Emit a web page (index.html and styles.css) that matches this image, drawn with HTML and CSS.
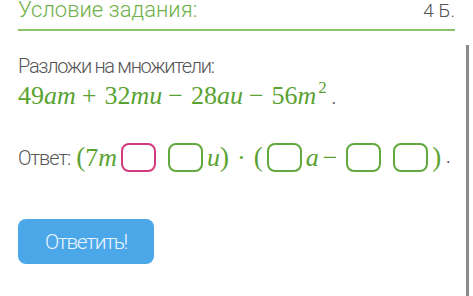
FILE: index.html
```html
<!DOCTYPE html>
<html>
  <head>
    <meta charset="UTF-8" />
    <title>Условие задания</title>
    <link rel="stylesheet" href="styles.css">
  </head>

  <body>
    <div class="task">
      <div class="task-header">
        <div class="task-title">Условие задания:</div>
        <div class="task-points">4 Б.</div>
      </div>

      <div class="task-body">
        <div class="task-text">Разложи на множители:</div>
        <div class="formula"><span class="num">49</span><span class="var">am</span><span class="op">+</span><span class="num">32</span><span class="var">mu</span><span class="op">−</span><span class="num">28</span><span class="var">au</span><span class="op">−</span><span class="num">56</span><span class="var">m</span><sup class="sup">2</sup><span class="dot">.</span></div>

        <div class="answer">
          <span class="answer-label">Ответ:</span>
          <span class="answer-formula">
            <span class="paren">(</span><span class="num">7</span><span class="var">m</span>
            <input class="cell cell-active" type="text" />
            <input class="cell" type="text" />
            <span class="var">u</span><span class="paren">)</span>
            <span class="cdot">·</span>
            <span class="paren">(</span>
            <input class="cell" type="text" />
            <span class="var">a</span>
            <span class="minus">−</span>
            <input class="cell" type="text" />
            <input class="cell" type="text" />
            <span class="paren">)</span><span class="dot">.</span>
          </span>
        </div>

        <button class="submit-btn">Ответить!</button>
      </div>
    </div>

    <div class="scrollbar"></div>
  </body>
</html>
```

FILE: styles.css
```css
body {
  font-family: Roboto, "Noto Sans", sans-serif;
  font-weight: 300;
  margin: 0;
  padding: 0;
  background: #fff;
  overflow: hidden;
}

.task {
  width: 437px;
  margin-left: 18px;
}

.task-header {
  display: flex;
  justify-content: space-between;
  align-items: baseline;
  margin-top: -1px;
  padding-bottom: 7px;
  border-bottom: 2px solid #8cc36a;
}

.task-title {
  font-size: 22px;
  line-height: 22px;
  color: #6fb04a;
}

.task-points {
  font-size: 19px;
  line-height: 22px;
  color: #555;
}

.task-body {
  padding-top: 24px;
}

.task-text {
  font-size: 20px;
  line-height: 22px;
  letter-spacing: -1.3px;
  color: #555;
}

.formula {
  font-family: "Liberation Serif", "DejaVu Serif", serif;
  font-weight: 400;
  color: #5aa232;
  font-size: 26px;
  line-height: 30px;
  margin-top: 4px;
  white-space: nowrap;
}

.var {
  font-style: italic;
}

.op {
  display: inline-block;
  margin: 0 8px 0 6px;
}

.sup {
  font-size: 17px;
  line-height: 0;
  vertical-align: 11px;
  margin-left: 2px;
}

.dot {
  color: #555;
  font-size: 16px;
  margin-left: 5px;
}

.answer {
  display: flex;
  align-items: center;
  margin-top: 28px;
}

.answer-label {
  font-size: 20px;
  letter-spacing: -1px;
  color: #555;
  margin-right: 6px;
}

.answer-formula {
  display: flex;
  align-items: center;
  font-family: "Liberation Serif", "DejaVu Serif", serif;
  font-weight: 400;
  color: #5aa232;
  font-size: 26px;
  white-space: nowrap;
}

.paren {
  font-size: 27px;
}

.cell {
  width: 35px;
  height: 29px;
  box-sizing: border-box;
  border: 2px solid #63a83d;
  border-radius: 8px;
  margin: 0 4px 0 4px;
  padding: 0;
  background: #fff;
}

.cell + .cell {
  margin-left: 8px;
}

.cell-active {
  border-color: #d23a80;
}

.cdot {
  margin: 0 8px;
}

.minus {
  margin: 0 5px 0 4px;
}

.submit-btn {
  display: block;
  margin-top: 46px;
  width: 136px;
  height: 45px;
  border: none;
  border-radius: 8px;
  background: #4ba7e8;
  color: #eaf5ff;
  font-family: Roboto, sans-serif;
  font-weight: 300;
  font-size: 21px;
  letter-spacing: -1.4px;
  cursor: pointer;
}

.scrollbar {
  position: fixed;
  right: 4px;
  top: 45px;
  bottom: 0;
  width: 3px;
  background: #8a8a8a;
}
```
